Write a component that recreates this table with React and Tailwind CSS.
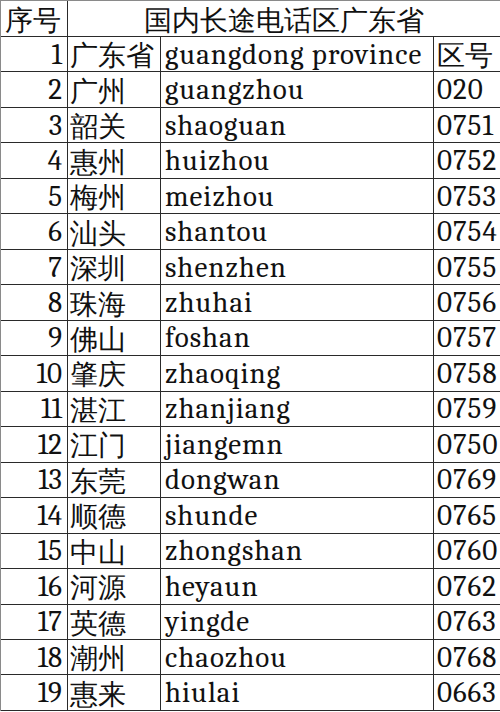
const rows = [
  ["1", "广东省", "guangdong province", "区号"],
  ["2", "广州", "guangzhou", "020"],
  ["3", "韶关", "shaoguan", "0751"],
  ["4", "惠州", "huizhou", "0752"],
  ["5", "梅州", "meizhou", "0753"],
  ["6", "汕头", "shantou", "0754"],
  ["7", "深圳", "shenzhen", "0755"],
  ["8", "珠海", "zhuhai", "0756"],
  ["9", "佛山", "foshan", "0757"],
  ["10", "肇庆", "zhaoqing", "0758"],
  ["11", "湛江", "zhanjiang", "0759"],
  ["12", "江门", "jiangemn", "0750"],
  ["13", "东莞", "dongwan", "0769"],
  ["14", "顺德", "shunde", "0765"],
  ["15", "中山", "zhongshan", "0760"],
  ["16", "河源", "heyaun", "0762"],
  ["17", "英德", "yingde", "0763"],
  ["18", "潮州", "chaozhou", "0768"],
  ["19", "惠来", "hiulai", "0663"],
];

const cjk = "font-sans font-light text-[28px] leading-none";
const latin = "font-serif text-[29px] leading-none tracking-[1px]";
const cell = "border-r border-b border-[#2a2a2a] flex items-center whitespace-nowrap text-[#111]";

export default function App() {
  return (
    <div className="w-[500px] h-[712px] bg-white">
      <div className="grid grid-cols-[67px_93px_273px_67px] grid-rows-[36px_repeat(19,35.47px)] border-t border-l border-[#8a8a8a]">
        <div className={`${cell} ${cjk} pl-[4px]`}>序号</div>
        <div className={`${cell} ${cjk} col-span-3 justify-center border-r-[#8a8a8a]`}>
          国内长途电话区广东省
        </div>
        {rows.map((r, i) => (
          <div key={i} className="contents">
            <div className={`${cell} ${latin} justify-end pr-[5px] tracking-normal`}>{r[0]}</div>
            <div className={`${cell} ${cjk} pl-[2px]`}>{r[1]}</div>
            <div className={`${cell} ${latin} pl-[4px]`}>{r[2]}</div>
            <div
              className={`${cell} ${i === 0 ? cjk : latin} pl-[3px] border-r-[#8a8a8a]`}
            >
              {r[3]}
            </div>
          </div>
        ))}
      </div>
    </div>
  );
}
